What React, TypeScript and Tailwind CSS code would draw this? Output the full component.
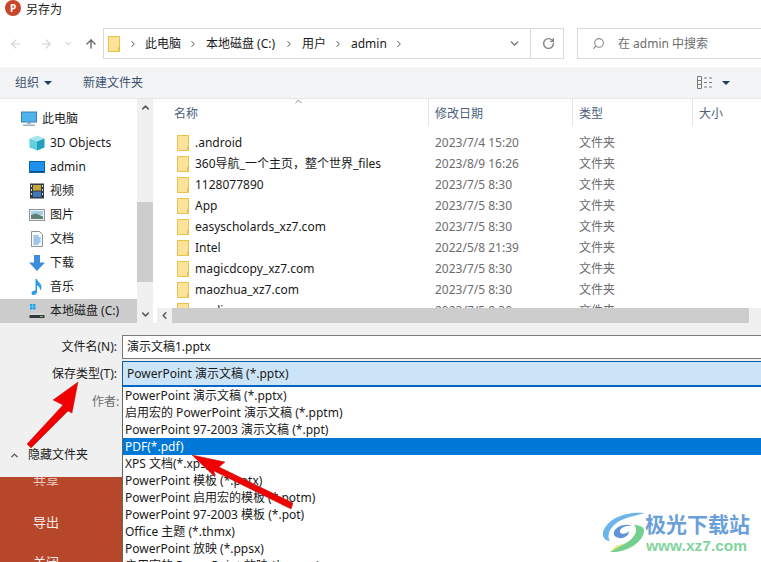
import React from 'react';
import { ArrowLeft, ArrowRight, ArrowUp, ChevronDown, ChevronLeft, ChevronRight, ChevronUp, RotateCw, Search } from 'lucide-react';

const FILES = [
  { name: '.android', date: '2023/7/4 15:20' },
  { name: '360导航_一个主页，整个世界_files', date: '2023/8/9 16:26' },
  { name: '1128077890', date: '2023/7/5 8:30' },
  { name: 'App', date: '2023/7/5 8:30' },
  { name: 'easyscholards_xz7.com', date: '2023/7/5 8:30' },
  { name: 'Intel', date: '2022/5/8 21:39' },
  { name: 'magicdcopy_xz7.com', date: '2023/7/5 8:30' },
  { name: 'maozhua_xz7.com', date: '2023/7/5 8:30' },
  { name: 'media', date: '2023/7/5 8:30' },
];

const TYPES = [
  'PowerPoint 演示文稿 (*.pptx)',
  '启用宏的 PowerPoint 演示文稿 (*.pptm)',
  'PowerPoint 97-2003 演示文稿 (*.ppt)',
  'PDF(*.pdf)',
  'XPS 文档(*.xps)',
  'PowerPoint 模板 (*.potx)',
  'PowerPoint 启用宏的模板 (*.potm)',
  'PowerPoint 97-2003 模板 (*.pot)',
  'Office 主题 (*.thmx)',
  'PowerPoint 放映 (*.ppsx)',
  '启用宏的 PowerPoint 放映 (*.ppsm)',
];

const FolderIcon = () => (
  <svg width="12" height="16" viewBox="0 0 12 16" className="shrink-0">
    <rect x="0.5" y="0.5" width="11" height="15" fill="#fde39a" stroke="#e8c14e" />
    <rect x="10" y="11" width="2" height="5" fill="#e8c14e" />
  </svg>
);

const NAV: { label: string; icon: React.ReactElement; top?: boolean }[] = [
  {
    label: '此电脑',
    top: true,
    icon: (
      <svg width="16" height="16" viewBox="0 0 16 16">
        <rect x="0.5" y="1" width="15" height="10" fill="#4db4ee" stroke="#3f7fa8" />
        <rect x="6" y="11" width="4" height="2" fill="#9cb0bd" />
        <rect x="2" y="13.5" width="12" height="1.5" fill="#9cb0bd" />
      </svg>
    ),
  },
  {
    label: '3D Objects',
    icon: (
      <svg width="16" height="16" viewBox="0 0 16 16">
        <path d="M8 0.5 15.5 3.5 8 6.5 0.5 3.5Z" fill="#a5e6ee" />
        <path d="M0.5 3.5 8 6.5V15.5L0.5 12.5Z" fill="#62d0dc" />
        <path d="M15.5 3.5 8 6.5V15.5L15.5 12.5Z" fill="#239fc0" />
      </svg>
    ),
  },
  {
    label: 'admin',
    icon: (
      <svg width="16" height="16" viewBox="0 0 16 16">
        <rect x="0.5" y="2.5" width="15" height="11" fill="#1e90ee" stroke="#13609f" />
        <path d="M1 13h14v-1H1Z" fill="#0b4f8a" />
      </svg>
    ),
  },
  {
    label: '视频',
    icon: (
      <svg width="16" height="16" viewBox="0 0 16 16">
        <rect x="1" y="0.5" width="14" height="15" fill="#343a40" />
        <rect x="4" y="2" width="8" height="5.5" fill="#c9a63c" />
        <rect x="4" y="8.5" width="8" height="5.5" fill="#3d79b8" />
        <path d="M2 2h1v2H2Zm0 4h1v2H2Zm0 4h1v2H2Zm11-8h1v2h-1Zm0 4h1v2h-1Zm0 4h1v2h-1Z" fill="#d7dde2" />
      </svg>
    ),
  },
  {
    label: '图片',
    icon: (
      <svg width="16" height="16" viewBox="0 0 16 16">
        <rect x="0.5" y="2.5" width="15" height="11" fill="#eef1f3" stroke="#8d959b" />
        <rect x="2" y="4" width="12" height="4" fill="#a7cde6" />
        <path d="M2 8 7 6.5 14 9.5V12H2Z" fill="#5e8272" />
      </svg>
    ),
  },
  {
    label: '文档',
    icon: (
      <svg width="16" height="16" viewBox="0 0 16 16">
        <path d="M2.5 0.5H10.5L13.5 3.5V15.5H2.5Z" fill="#f8f9fa" stroke="#8b9299" />
        <path d="M4.5 5h5M4.5 7h7M4.5 9h7M4.5 11h7M4.5 13h5" stroke="#4a90d9" />
      </svg>
    ),
  },
  {
    label: '下载',
    icon: (
      <svg width="16" height="16" viewBox="0 0 16 16">
        <path d="M5 0H11V7.5H16L8 16 0 7.5H5Z" fill="#3c8ddc" />
      </svg>
    ),
  },
  {
    label: '音乐',
    icon: (
      <svg width="16" height="16" viewBox="0 0 16 16">
        <path d="M6.5 0H8C8.5 3 12.5 4 12.5 8 12.5 9.5 12 10.5 11 11.5 11.3 9 10 7 8 6.5V13C8 15 6 16 4.5 16 3 16 2.5 15 2.5 14 2.5 12.5 4.5 11.3 6.5 11.5Z" fill="#2c9be8" />
      </svg>
    ),
  },
  {
    label: '本地磁盘 (C:)',
    icon: (
      <svg width="16" height="16" viewBox="0 0 16 16">
        <path d="M1 1h2.5v2.5H1ZM4 1h2.5v2.5H4ZM1 4h2.5v2.5H1ZM4 4h2.5v2.5H4Z" fill="#19a5ee" />
        <path d="M1.5 10H14.5L15.5 12H0.5Z" fill="#d3d6d8" />
        <rect x="0.5" y="12" width="15" height="3" fill="#33383d" />
        <rect x="11" y="13" width="3" height="1" fill="#63d13e" />
      </svg>
    ),
  },
];

const Caret = () => (
  <span className="inline-block w-0 h-0 border-x-[4px] border-x-transparent border-t-[4px] border-t-[#1f3a5f]" />
);

const Crumb = () => <ChevronRight size={10} strokeWidth={2.5} className="text-[#6b6b6b] shrink-0" />;

const App: React.FC = () => {
  return (
    <div
      className="relative w-[761px] h-[562px] overflow-hidden bg-white text-[12px] text-[#1a1a1a]"
      style={{ fontFamily: '"Noto Sans", "Noto Sans CJK SC", sans-serif' }}
    >
      {/* title bar */}
      <div className="h-[20px] flex pl-[5px]">
        <div className="w-[16px] h-[16px] rounded-full bg-[#c8452a] flex items-center justify-center text-white text-[10px] font-bold">
          P
        </div>
        <span className="ml-[5px] leading-[19px]">另存为</span>
      </div>

      {/* address row */}
      <div className="h-[47px] flex items-center">
        <div className="w-[103px] flex items-center shrink-0 pl-[9px]">
          <ArrowLeft size={14} className="text-[#d4d4d4]" />
          <ArrowRight size={14} className="text-[#d4d4d4] ml-[16px]" />
          <ChevronDown size={9} strokeWidth={3} className="text-[#d4d4d4] ml-[11px]" />
          <ArrowUp size={14} strokeWidth={2.5} className="text-[#6e6e6e] ml-[11px]" />
        </div>
        <div className="w-[461px] h-[31px] shrink-0 border border-[#d9d9d9] flex items-center">
          <div className="ml-[4px] flex">
            <FolderIcon />
          </div>
          <div className="ml-[8px] w-[12px] flex"><Crumb /></div>
          <span className="ml-[5px] w-[36px]">此电脑</span>
          <div className="ml-[7px] w-[12px] flex"><Crumb /></div>
          <span className="ml-[6px] w-[72px] whitespace-nowrap">本地磁盘 (C:)</span>
          <div className="ml-[6px] w-[12px] flex"><Crumb /></div>
          <span className="ml-[6px] w-[24px]">用户</span>
          <div className="ml-[7px] w-[12px] flex"><Crumb /></div>
          <span className="ml-[6px] w-[36px]">admin</span>
          <div className="ml-[7px] w-[12px] flex"><Crumb /></div>
          <ChevronDown size={13} strokeWidth={2.5} className="text-[#6b6b6b] ml-[102px]" />
          <div className="ml-[9px] w-[1px] h-full bg-[#d9d9d9]" />
          <RotateCw size={13} strokeWidth={2.5} className="text-[#808080] ml-[11px]" />
        </div>
        <div className="ml-[13px] flex-1 h-[31px] border border-[#d9d9d9] border-r-0 flex items-center pl-[14px] text-[#6d6d6d] whitespace-nowrap">
          <Search size={13} className="text-[#8a8a8a] -scale-x-100" />
          <span className="ml-[13px]">在 admin 中搜索</span>
        </div>
      </div>

      {/* toolbar */}
      <div className="h-[32px] bg-[#f3f4f6] border-b border-[#e4e6e8] flex items-center pl-[15px] text-[#3c5270]">
        <span>组织</span>
        <span className="ml-[5px] flex"><Caret /></span>
        <span className="ml-[31px]">新建文件夹</span>
        <div className="ml-auto flex items-center mr-[31px]">
          <svg width="16" height="13" viewBox="0 0 16 13">
            <path d="M0.5 0.5h4v12h-4ZM0.5 4.5h4M0.5 8.5h4M7 2h3M12 2h3M7 6.5h3M12 6.5h3M7 11h3M12 11h3" stroke="#7a7a7a" fill="none" />
          </svg>
          <span className="ml-[9px] flex"><Caret /></span>
        </div>
      </div>

      {/* browser area */}
      <div className="h-[224px] flex">
        <div className="w-[137px] shrink-0 pt-[8px]">
          {NAV.map((item) => (
            <div
              key={item.label}
              className={`h-[24px] flex items-center whitespace-nowrap ${item.top ? 'pl-[21px]' : 'pl-[29px]'} ${item.label.startsWith('本地') ? 'bg-[#cccccc]' : ''}`}
            >
              {item.icon}
              <span className="ml-[5px]">{item.label}</span>
            </div>
          ))}
        </div>
        <div className="w-[16px] shrink-0 bg-[#f0f0f0] flex flex-col items-center justify-between py-[3px] relative">
          <ChevronUp size={11} strokeWidth={3.5} className="text-[#606060]" />
          <div className="absolute left-0 top-[103px] w-full h-[80px] bg-[#cdcdcd]" />
          <ChevronDown size={11} strokeWidth={3.5} className="text-[#606060]" />
        </div>
        <div className="w-[4px] shrink-0" />
        <div className="flex-1 flex flex-col min-w-0 relative">
          {/* column headers */}
          <div className="h-[27px] shrink-0 flex text-[#4c607a] relative">
            <ChevronUp size={11} className="absolute left-[136px] -top-[3px] text-[#7a7a7a]" />
            <div className="w-[271px] pl-[17px] pt-[6px]">名称</div>
            <div className="w-[144px] border-l border-[#e5e5e5] pl-[6px] pt-[6px]">修改日期</div>
            <div className="w-[120px] border-l border-[#e5e5e5] pl-[6px] pt-[6px]">类型</div>
            <div className="flex-1 border-l border-[#e5e5e5] pl-[6px] pt-[6px]">大小</div>
          </div>
          {/* rows */}
          <div className="pt-[6px] flex-1 overflow-hidden">
            {FILES.map((f) => (
              <div key={f.name} className="h-[21px] flex items-center whitespace-nowrap">
                <div className="w-[271px] pl-[20px] flex items-center">
                  <FolderIcon />
                  <span className="ml-[6px]">{f.name}</span>
                </div>
                <div className="w-[144px] pl-[7px] text-[#6d6d6d]">{f.date}</div>
                <div className="pl-[7px] text-[#6d6d6d]">文件夹</div>
              </div>
            ))}
          </div>
          {/* horizontal scrollbar */}
          <div className="h-[15px] shrink-0 flex bg-[#f0f0f0] items-center">
            <div className="w-[15px] flex justify-center">
              <ChevronLeft size={11} strokeWidth={3.5} className="text-[#606060]" />
            </div>
            <div className="w-[577px] h-full bg-[#cdcdcd]" />
          </div>
        </div>
      </div>

      {/* bottom panel */}
      <div className="h-[154px] bg-[#f0f0f0] relative">
        <div className="h-[12px]" />
        <div className="h-[24px] flex">
          <div className="w-[118px] pr-[1px] text-right pt-[3px]">文件名(N):</div>
          <div className="flex-1 ml-[4px] bg-white border-y border-l border-[#7a7a7a] pl-[4px] leading-[21px]">演示文稿1.pptx</div>
        </div>
        <div className="h-[2px]" />
        <div className="h-[26px] flex">
          <div className="w-[118px] pr-[1px] text-right pt-[4px]">保存类型(T):</div>
          <div className="flex-1 ml-[4px] bg-[#cce4f7] border-t border-b-2 border-l border-t-[#0a5ea8] border-b-[#0067c0] border-l-[#0a5ea8] pl-[4px] leading-[23px]">
            PowerPoint 演示文稿 (*.pptx)
          </div>
        </div>
        <div className="pl-[92px] pt-[6px] text-[#6d6d6d]">作者:</div>
        <div className="absolute left-[9px] top-[123px] flex items-center">
          <ChevronUp size={11} strokeWidth={3} className="text-[#555555]" />
          <span className="ml-[8px]">隐藏文件夹</span>
        </div>
      </div>

      {/* PowerPoint backstage behind the dialog */}
      <div className="h-[85px] bg-[#b7472a] text-white/90 text-[13px] pl-[33px]">
        <div className="h-[9px] leading-[9px] overflow-hidden opacity-80">共享</div>
        <div className="mt-[27px] leading-[18px]">导出</div>
        <div className="mt-[22px] leading-[18px]">关闭</div>
      </div>

      {/* file type dropdown */}
      <div className="absolute left-[122px] top-[387px] right-0 bottom-0 bg-white border-l border-[#646464] overflow-hidden whitespace-nowrap">
        {TYPES.map((t) => (
          <div
            key={t}
            className={`h-[17px] leading-[17px] pl-[2px] ${t.startsWith('PDF') ? 'bg-[#0078d7] text-white' : ''}`}
          >
            {t}
          </div>
        ))}
      </div>

      {/* red annotation arrows */}
      <svg className="absolute left-0 top-0 pointer-events-none" width="761" height="562" viewBox="0 0 761 562">
        <polygon points="78,382 53,400 63,405 27,444 31,448 68,411 72,413" fill="#f00000" stroke="#a8231b" strokeWidth="0.5" />
        <polygon points="192,455 225,462 219,467 293,503 291,509 214,471 215,477" fill="#f00000" stroke="#a8231b" strokeWidth="0.5" />
      </svg>

      {/* watermark */}
      <div className="absolute left-[602px] top-[512px] flex items-start">
        <svg width="44" height="41" viewBox="0 0 44 41" className="shrink-0">
          <path d="M43 1C26-1 6 5 1 20 0 26 4 29 8 29 4 24 8 12 22 7 29 4 37 3 43 1Z" fill="#6cb4ea" />
          <path d="M8 40C24 41 40 31 42 20 43 15 38 13 32 13 37 17 33 26 24 31 18 34 12 37 8 40Z" fill="#74cf8f" />
          <path d="M8 40C14 37 18 34 24 31L14 34Z" fill="#e3e36b" />
          <path d="M12 20C14 14 24 11 30 14 23 13 17 17 18 20 19 23 25 22 27 19 27 24 21 27 17 26 13 25 11 23 12 20Z" fill="#5f95d6" />
        </svg>
        <div className="-ml-[1px] whitespace-nowrap">
          <div className="text-[21px] leading-[24px] font-bold text-[#6a9fda]">极光下载站</div>
          <div className="text-[15.5px] leading-[18px] font-semibold text-[#82d49e] mt-[1px] ml-[1px]" style={{ fontFamily: '"Liberation Sans", sans-serif' }}>
            www.xz7.com
          </div>
        </div>
      </div>
    </div>
  );
};

export default App;
